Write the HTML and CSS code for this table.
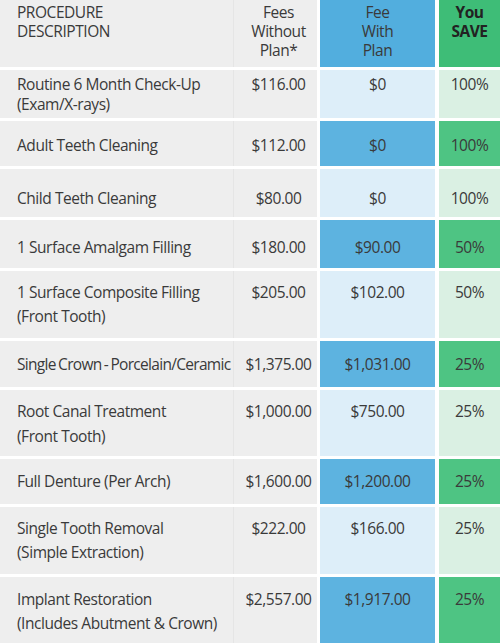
FILE: index.html
```html
<!DOCTYPE html>
<html lang="en">
<head>
<meta charset="utf-8">
<title>Dental Plan Fees</title>
<link rel="stylesheet" href="styles.css">
</head>
<body>
<div class="table">
  <div class="row head">
    <div class="cell desc">PROCEDURE<br>DESCRIPTION</div>
    <div class="cell fee">Fees<br>Without<br>Plan*</div>
    <div class="cell plan strong">Fee<br>With<br>Plan</div>
    <div class="cell save strong"><b>You<br>SAVE</b></div>
  </div>
  <div class="row r1 light">
    <div class="cell desc">Routine 6 Month Check-Up<br>(Exam/X-rays)</div>
    <div class="cell fee">$116.00</div>
    <div class="cell plan">$0</div>
    <div class="cell save">100%</div>
  </div>
  <div class="row r2 dark">
    <div class="cell desc">Adult Teeth Cleaning</div>
    <div class="cell fee">$112.00</div>
    <div class="cell plan">$0</div>
    <div class="cell save">100%</div>
  </div>
  <div class="row r3 light">
    <div class="cell desc">Child Teeth Cleaning</div>
    <div class="cell fee">$80.00</div>
    <div class="cell plan">$0</div>
    <div class="cell save">100%</div>
  </div>
  <div class="row r4 dark">
    <div class="cell desc">1 Surface Amalgam Filling</div>
    <div class="cell fee">$180.00</div>
    <div class="cell plan">$90.00</div>
    <div class="cell save">50%</div>
  </div>
  <div class="row r5 light">
    <div class="cell desc">1 Surface Composite Filling<br>(Front Tooth)</div>
    <div class="cell fee">$205.00</div>
    <div class="cell plan">$102.00</div>
    <div class="cell save">50%</div>
  </div>
  <div class="row r6 dark">
    <div class="cell desc tight">Single Crown - Porcelain/Ceramic</div>
    <div class="cell fee">$1,375.00</div>
    <div class="cell plan">$1,031.00</div>
    <div class="cell save">25%</div>
  </div>
  <div class="row r7 light">
    <div class="cell desc">Root Canal Treatment<br>(Front Tooth)</div>
    <div class="cell fee">$1,000.00</div>
    <div class="cell plan">$750.00</div>
    <div class="cell save">25%</div>
  </div>
  <div class="row r8 dark">
    <div class="cell desc">Full Denture (Per Arch)</div>
    <div class="cell fee">$1,600.00</div>
    <div class="cell plan">$1,200.00</div>
    <div class="cell save">25%</div>
  </div>
  <div class="row r9 light">
    <div class="cell desc">Single Tooth Removal<br>(Simple Extraction)</div>
    <div class="cell fee">$222.00</div>
    <div class="cell plan">$166.00</div>
    <div class="cell save">25%</div>
  </div>
  <div class="row r10 dark">
    <div class="cell desc">Implant Restoration<br>(Includes Abutment &amp; Crown)</div>
    <div class="cell fee">$2,557.00</div>
    <div class="cell plan">$1,917.00</div>
    <div class="cell save">25%</div>
  </div>
</div>
</body>
</html>
```
FILE: styles.css
```css
html, body {
  margin: 0;
  padding: 0;
  background: #ffffff;
}

.table {
  width: 500px;
  display: flex;
  flex-direction: column;
  gap: 3px;
}

.row {
  display: grid;
  grid-template-columns: 234px 83px 118px 65px;
}

.cell {
  font-family: "Open Sans", "DejaVu Sans", sans-serif;
  font-size: 15.5px;
  line-height: 24px;
  letter-spacing: -0.45px;
  color: #3a3a3a;
  box-sizing: border-box;
  white-space: nowrap;
}

.desc {
  background: #eeeeee;
  border-right: 1px solid #e5e5e5;
  padding-left: 17px;
}

.tight {
  word-spacing: -1px;
  letter-spacing: -0.7px;
}

.fee {
  background: #eeeeee;
  text-align: center;
  padding-left: 6px;
}

.plan {
  margin-left: 3px;
  text-align: center;
}

.save {
  margin-left: 4px;
  text-align: center;
}

/* header */
.head { height: 67px; }
.head .cell {
  line-height: 19px;
  padding-top: 3px;
}
.head .plan { background: #52aede; }
.head .save { background: #3ebd77; color: #222222; }
.head .save b { font-weight: 700; }

/* row colour variants */
.light .plan { background: #ddeef9; }
.light .save { background: #daf0e3; }
.dark .plan { background: #5db3e0; }
.dark .save { background: #4ec483; }

/* row sizes */
.r1 { height: 48px; }
.r1 .cell { line-height: 20px; padding-top: 4px; }
.r2 { height: 45px; }
.r2 .cell { padding-top: 12px; }
.r3 { height: 48px; }
.r3 .cell { padding-top: 17px; }
.r4 { height: 48px; }
.r4 .cell { padding-top: 15px; }
.r5 { height: 67px; }
.r5 .cell { padding-top: 9px; }
.r6 { height: 46px; }
.r6 .cell { padding-top: 11px; }
.r7 { height: 66px; }
.r7 .cell { padding-top: 9px; line-height: 25px; }
.r8 { height: 45px; }
.r8 .cell { padding-top: 10px; }
.r9 { height: 67px; }
.r9 .cell { padding-top: 9px; }
.r10 { height: 66px; }
.r10 .cell { padding-top: 10px; }
```
